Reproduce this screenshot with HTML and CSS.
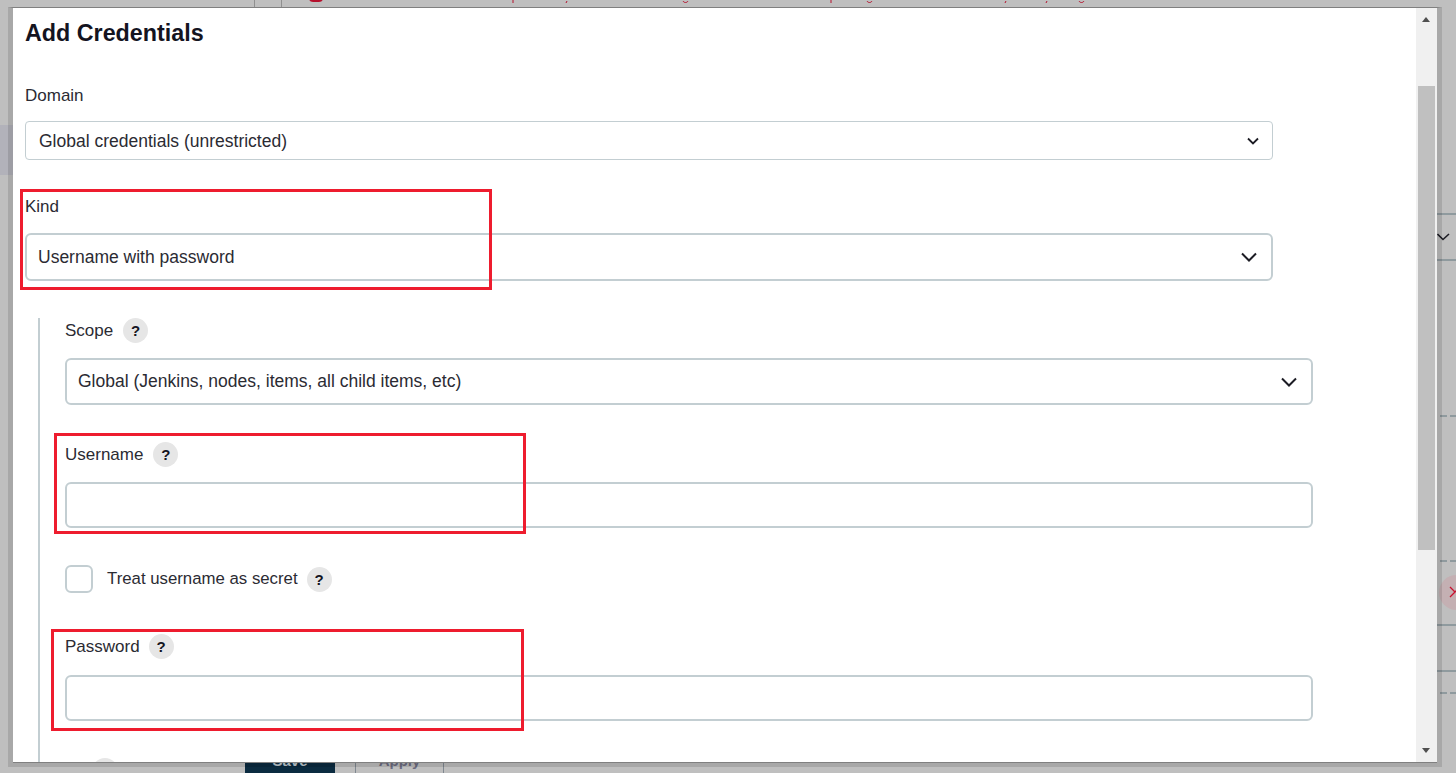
FILE: index.html
```html
<!DOCTYPE html>
<html lang="en">
<head>
  <meta charset="UTF-8" />
  <title>Add Credentials</title>
  <link rel="stylesheet" href="styles.css">
</head>
<body>

<!-- what shows of the page behind the dialog -->
<div class="backdrop">
  <i class="bg-line bg-v1"></i>
  <i class="bg-line bg-v2"></i>
  <i class="bg-alert"></i>
  <svg class="bg-ticks" width="1100" height="4" viewBox="0 0 1100 4"><path d="M513 0v3M567 1l-1 2M683 1c1 2 4 2 5 0M831 0v3M867 1c1 2 4 2 5 0M1006 1l-1 2M1047 1l-1 2M1079 1c1 2 4 2 5 0" fill="none" stroke="#b5102c" stroke-width="1"/></svg>
  <i class="bg-side"></i>
  <i class="bg-rule bg-r1"></i>
  <i class="bg-rule bg-r2"></i>
  <i class="bg-dash bg-d1"></i>
  <i class="bg-dash bg-d2"></i>
  <i class="bg-rule bg-r3"></i>
  <i class="bg-rule bg-r4"></i>
  <i class="bg-dash bg-d3"></i>
  <svg class="bg-chev" width="14" height="10" viewBox="0 0 14 10"><path d="M.5 2l5.5 5.5L12 2" fill="none" stroke="#1c1c24" stroke-width="1.6"/></svg>
  <div class="bg-remove"><svg width="16" height="16" viewBox="0 0 16 16"><path d="M3 3l5 5-5 5M13 3L8 8" fill="none" stroke="#c8102e" stroke-width="1.3"/></svg></div>
  <div class="page-btn save"><span>Save</span></div>
  <div class="page-btn apply"><span>Apply</span></div>
</div>

<div class="modal">
  <div class="modal-inner">
    <div class="content">
      <h1>Add Credentials</h1>

      <div class="field domain">
        <label>Domain</label>
        <div class="select small">
          <span>Global credentials (unrestricted)</span>
          <svg width="14" height="10" viewBox="0 0 14 10"><path d="M2 2.5l5 5 5-5" fill="none" stroke="#1c1c24" stroke-width="1.8"/></svg>
        </div>
      </div>

      <div class="field kind">
        <label>Kind</label>
        <div class="select">
          <span>Username with password</span>
          <svg width="18" height="12" viewBox="0 0 18 12"><path d="M2 2.5l7 7 7-7" fill="none" stroke="#1c1c24" stroke-width="2"/></svg>
        </div>
      </div>

      <div class="nested">
        <div class="field scope">
          <label>Scope <b class="help">?</b></label>
          <div class="select">
            <span>Global (Jenkins, nodes, items, all child items, etc)</span>
            <svg width="18" height="12" viewBox="0 0 18 12"><path d="M2 2.5l7 7 7-7" fill="none" stroke="#1c1c24" stroke-width="2"/></svg>
          </div>
        </div>

        <div class="field username">
          <label>Username <b class="help">?</b></label>
          <input type="text" />
        </div>

        <div class="check-row">
          <span class="checkbox"></span>
          <label>Treat username as secret</label>
          <b class="help">?</b>
        </div>

        <div class="field password">
          <label>Password <b class="help">?</b></label>
          <input type="text" />
        </div>

        <div class="next-help"></div>
      </div>
    </div>

    <div class="scrollbar">
      <i class="arrow-up"></i>
      <div class="track"><div class="thumb"></div></div>
      <i class="arrow-down"></i>
    </div>
  </div>
</div>

<!-- red boxes drawn on the screenshot -->
<div class="mark mark-kind"></div>
<div class="mark mark-username"></div>
<div class="mark mark-password"></div>

</body>
</html>
```

FILE: styles.css
```css
* {
  box-sizing: border-box;
}

html, body {
  height: 100%;
}

body {
  margin: 0;
  background: #bfbfbf;
  font-family: "Liberation Sans", Arial, sans-serif;
  font-size: 17px;
  color: #2b2b33;
  overflow: hidden;
}

/* page behind */
.backdrop i, .bg-chev, .bg-remove, .bg-ticks {
  position: absolute;
  display: block;
}

.bg-line { top: 0; width: 1px; height: 7px; background: #8f8f8f; }
.bg-v1 { left: 254px; }
.bg-v2 { left: 281px; }

.bg-ticks { left: 0; top: 0; }

.bg-alert {
  left: 309px;
  top: -6px;
  width: 14px;
  height: 8px;
  border-radius: 7px;
  background: #b5102c;
}

.bg-side { left: 0; top: 125px; width: 13px; height: 50px; background: #b2b2ba; }

.bg-rule { left: 1437px; width: 19px; height: 2px; background: #8f9a9e; }
.bg-r1 { top: 213px; }
.bg-r2 { top: 259px; }
.bg-r3 { top: 624px; }
.bg-r4 { top: 670px; }

.bg-dash {
  left: 1440px;
  width: 16px;
  height: 2px;
  background: linear-gradient(to right, #8f9a9e 7px, transparent 7px, transparent 10px, #8f9a9e 10px);
}
.bg-d1 { top: 415px; }
.bg-d2 { top: 560px; }
.bg-d3 { top: 692px; }

.bg-chev { left: 1437px; top: 232px; }

.bg-remove {
  left: 1439px;
  top: 575px;
  width: 35px;
  height: 35px;
  border-radius: 50%;
  background: #c4b0b3;
  padding: 9px 0 0 8px;
}

/* buttons of the page, the dialog hides their upper part */
.page-btn {
  position: absolute;
  top: 750px;
  height: 23px;
  overflow: hidden;
  text-align: center;
  font-weight: bold;
  font-size: 15px;
  line-height: 18px;
}

.page-btn span {
  display: block;
  padding-top: 2px;
}

.save { left: 245px; width: 90px; background: #0b2b40; color: #bfc9d0; }
.apply {
  left: 355px;
  width: 89px;
  color: #6c6c80;
  border: 1px solid #808890;
  border-width: 0 1px;
}

/* dialog */
.modal {
  position: absolute;
  left: 8px;
  top: 7px;
  width: 1434px;
  height: 760px;
  border-style: solid;
  border-color: rgba(0, 0, 0, 0.115);
  border-width: 1px 5px 4px 5px;
  border-top-color: #808080;
  z-index: 2;
}

.modal-inner {
  display: flex;
  height: 100%;
  background: #fff;
  border-bottom: 1px solid #808080;
}

.content {
  flex: 1;
  overflow: hidden;
  padding: 0 0 0 12px;
}

h1 {
  margin: 10px 0 0;
  font-size: 23.3px;
  line-height: 30px;
  font-weight: bold;
  color: #14141f;
}

label {
  display: block;
  line-height: 22px;
}

.field label {
  margin-bottom: 14px;
}

.domain { margin-top: 37px; }
.kind { margin-top: 36px; }
.kind label { margin-bottom: 15px; }

.select {
  display: flex;
  align-items: center;
  justify-content: space-between;
  width: 1248px;
  height: 47px;
  padding: 0 13px 0 11px;
  border: 2px solid #c3ced2;
  border-radius: 6px;
  font-size: 17.5px;
}

.kind .select {
  height: 48px;
}

.select.small {
  height: 39px;
  padding: 1px 12px 0 13px;
  border-width: 1px;
  border-radius: 4px;
}

.nested {
  margin: 37px 0 0 13px;
  padding-left: 25px;
  border-left: 2px solid #c3ced2;
  height: 460px;
}

.field label, .check-row {
  display: flex;
  align-items: center;
}

.help {
  display: inline-block;
  flex: none;
  width: 25px;
  height: 25px;
  margin-left: 10px;
  border-radius: 50%;
  background: #e6e6e6;
  color: #14141f;
  font-size: 15px;
  line-height: 25px;
  text-align: center;
}

.field.scope label { height: 25px; margin-bottom: 15px; }
.username { margin-top: 37px; }
.username label { height: 25px; margin-bottom: 15px; }
.password { margin-top: 41px; }
.password label { height: 25px; margin-bottom: 16px; }
.password .help { margin-left: 9px; }

input {
  display: block;
  width: 1248px;
  height: 46px;
  border: 2px solid #c3ced2;
  border-radius: 6px;
  background: #fff;
}

.check-row {
  margin-top: 37px;
  height: 28px;
}

.checkbox {
  width: 28px;
  height: 28px;
  border: 2px solid #c3ced2;
  border-radius: 6px;
}

.check-row label {
  margin-left: 14px;
  font-size: 16.8px;
}

.check-row .help {
  margin-left: 9px;
}

.next-help {
  width: 26px;
  height: 26px;
  margin: 37px 0 0 27px;
  border-radius: 50%;
  background: #e6e6e6;
}

/* scrollbar */
.scrollbar {
  position: relative;
  display: flex;
  flex-direction: column;
  align-items: center;
  width: 21px;
  background: #f0f0f0;
}

.track {
  flex: 1;
  width: 17px;
  padding-top: 78px;
}

.thumb {
  height: 464px;
  background: #c0c0c0;
}

.arrow-up, .arrow-down {
  position: absolute;
  left: 6px;
  width: 0;
  height: 0;
  border-left: 4.5px solid transparent;
  border-right: 4.5px solid transparent;
}

.arrow-up { top: 9px; border-bottom: 5px solid #505050; }
.arrow-down { bottom: 9px; border-top: 5px solid #505050; }

/* annotations */
.mark {
  position: absolute;
  border: 3px solid #ee1c2e;
  z-index: 4;
}

.mark-kind { left: 20px; top: 189px; width: 472px; height: 101px; }
.mark-username { left: 54px; top: 433px; width: 472px; height: 101px; }
.mark-password { left: 51px; top: 629px; width: 473px; height: 102px; }
```
